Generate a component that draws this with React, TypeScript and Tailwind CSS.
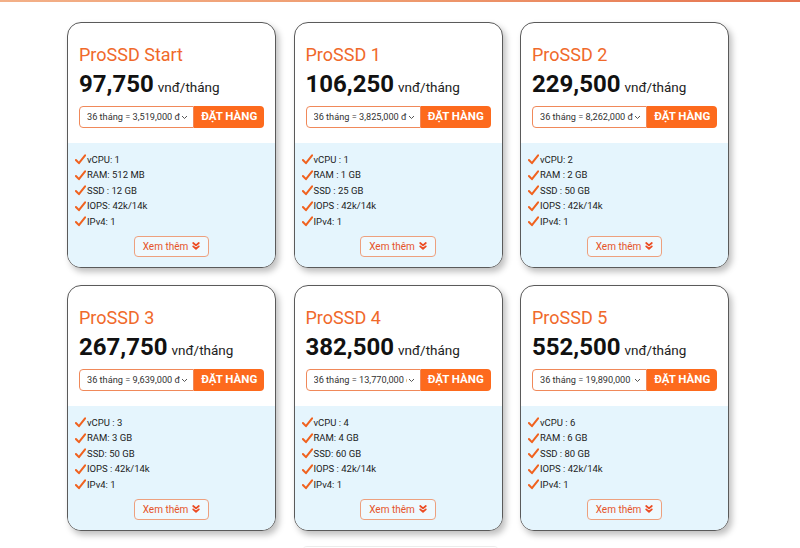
import React from 'react';

interface Plan {
  name: string;
  price: string;
  option: string;
  specs: string[];
}

const plans: Plan[] = [
  {
    name: 'ProSSD Start',
    price: '97,750',
    option: '36 tháng = 3,519,000 đ',
    specs: ['vCPU: 1', 'RAM: 512 MB', 'SSD : 12 GB', 'IOPS: 42k/14k', 'IPv4: 1'],
  },
  {
    name: 'ProSSD 1',
    price: '106,250',
    option: '36 tháng = 3,825,000 đ',
    specs: ['vCPU : 1', 'RAM : 1 GB', 'SSD : 25 GB', 'IOPS : 42k/14k', 'IPv4: 1'],
  },
  {
    name: 'ProSSD 2',
    price: '229,500',
    option: '36 tháng = 8,262,000 đ',
    specs: ['vCPU: 2', 'RAM : 2 GB', 'SSD : 50 GB', 'IOPS : 42k/14k', 'IPv4: 1'],
  },
  {
    name: 'ProSSD 3',
    price: '267,750',
    option: '36 tháng = 9,639,000 đ',
    specs: ['vCPU : 3', 'RAM: 3 GB', 'SSD: 50 GB', 'IOPS : 42k/14k', 'IPv4: 1'],
  },
  {
    name: 'ProSSD 4',
    price: '382,500',
    option: '36 tháng = 13,770,000 đ',
    specs: ['vCPU : 4', 'RAM: 4 GB', 'SSD: 60 GB', 'IOPS : 42k/14k', 'IPv4: 1'],
  },
  {
    name: 'ProSSD 5',
    price: '552,500',
    option: '36 tháng = 19,890,000 đ',
    specs: ['vCPU : 6', 'RAM : 6 GB', 'SSD : 80 GB', 'IOPS : 42k/14k', 'IPv4: 1'],
  },
];

const Check = () => (
  <svg width="11" height="11" viewBox="0 0 12 12" className="shrink-0">
    <path d="M1 6.5 L4.3 10 L11 1.5" fill="none" stroke="#f0621f" strokeWidth="2.2" strokeLinecap="round" strokeLinejoin="round" />
  </svg>
);

const ChevronsDown = () => (
  <svg width="8" height="8" viewBox="0 0 10 10">
    <path d="M1.5 1.2 L5 4.2 L8.5 1.2 M1.5 5.4 L5 8.4 L8.5 5.4" fill="none" stroke="#ec4b22" strokeWidth="2.2" strokeLinecap="round" strokeLinejoin="round" />
  </svg>
);

const PlanCard: React.FC<{ plan: Plan }> = ({ plan }) => (
  <div className="w-[209px] h-[246px] rounded-[14px] border border-[#5a5a5a] bg-white overflow-hidden flex flex-col shadow-[3px_4px_6px_rgba(0,0,0,0.25)]">
    <div className="px-[11px] pt-[21px] h-[120px] shrink-0">
      <div className="text-[18px] leading-[22px] text-[#f0692a]">{plan.name}</div>
      <div className="flex items-baseline mt-[5px] h-[26px]">
        <span className="text-[24px] font-bold text-[#111] leading-[26px]">{plan.price}</span>
        <span className="text-[13.5px] text-[#222] ml-[4px]">vnđ/tháng</span>
      </div>
      <div className="flex mt-[9px] h-[22px]">
        <div className="w-[116px] flex items-center border border-[#f0895a] rounded-l-[4px] pl-[7px] pr-[5px] overflow-hidden">
          <span className="text-[9.2px] text-[#333] whitespace-nowrap overflow-hidden flex-1">{plan.option}</span>
          <svg width="7" height="5" viewBox="0 0 7 5" className="shrink-0 ml-[1px]">
            <path d="M1 1 L3.5 3.5 L6 1" fill="none" stroke="#555" strokeWidth="1" />
          </svg>
        </div>
        <div className="w-[70px] bg-[#fd6a1d] rounded-r-[4px] flex items-center justify-center text-white text-[11.5px] font-bold">
          ĐẶT HÀNG
        </div>
      </div>
    </div>
    <div className="flex-1 bg-[#e5f5fd] px-[7px] pt-[9px]">
      <ul className="flex flex-col">
        {plan.specs.map((s) => (
          <li key={s} className="flex items-center h-[15.5px] gap-[1px]">
            <Check />
            <span className="text-[9.5px] text-[#222]">{s}</span>
          </li>
        ))}
      </ul>
      <div className="flex justify-center mt-[6px]">
        <div className="h-[21px] px-[8px] flex items-center gap-[4px] rounded-[4px] border border-[#eda07e] bg-white/40 text-[10px] text-[#e5542a]">
          Xem thêm <ChevronsDown />
        </div>
      </div>
    </div>
  </div>
);

export default function App() {
  return (
    <div className="w-[800px] h-[548px] bg-white overflow-hidden font-['Roboto',sans-serif]">
      <div className="h-[2px] bg-gradient-to-r from-[#f3b088] via-[#ee9a6e] to-[#e5734f]" />
      <div className="ml-[67px] mt-[20px] grid grid-cols-[209px_209px_209px] gap-x-[17.5px] gap-y-[17px] w-fit">
        {plans.map((p) => (
          <PlanCard key={p.name} plan={p} />
        ))}
      </div>
      <div className="ml-[303px] mt-[15px] w-[195px] h-[4px] rounded-t-[6px] border-t border-[#ececec]" />
    </div>
  );
}
